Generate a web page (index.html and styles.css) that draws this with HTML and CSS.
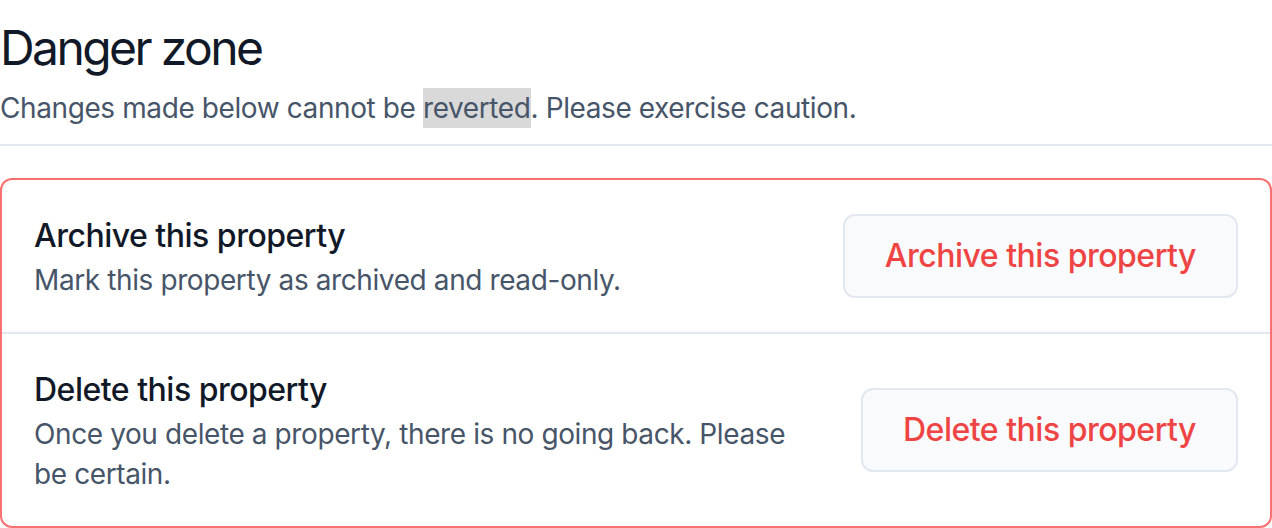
FILE: index.html
```html
<!DOCTYPE html>
<html lang="en">
<head>
<meta charset="utf-8">
<title>Danger zone</title>
<link rel="stylesheet" href="styles.css">
</head>
<body>
<main class="page">
  <header class="intro">
    <h2 class="title">Danger zone</h2>
    <p class="subtitle">Changes made below cannot be <span class="selected">reverted</span>. Please exercise caution.</p>
  </header>
  <hr class="separator">
  <section class="danger-card">
    <div class="danger-row">
      <div class="row-text">
        <h3 class="row-title">Archive this property</h3>
        <p class="row-desc">Mark this property as archived and read-only.</p>
      </div>
      <button class="danger-btn" type="button">Archive this property</button>
    </div>
    <div class="danger-row">
      <div class="row-text">
        <h3 class="row-title">Delete this property</h3>
        <p class="row-desc">Once you delete a property, there is no going back. Please be certain.</p>
      </div>
      <button class="danger-btn" type="button">Delete this property</button>
    </div>
  </section>
</main>
</body>
</html>
```

FILE: styles.css
```css
* {
  box-sizing: border-box;
}

html, body {
  margin: 0;
  padding: 0;
  background: #ffffff;
}

body {
  font-family: Inter, "Noto Sans", "Liberation Sans", sans-serif;
  color: #0f172a;
}

.page {
  padding-top: 16px;
}

.intro {
  display: flex;
  flex-direction: column;
  gap: 8px;
}

.title {
  margin: 0;
  font-size: 48px;
  line-height: 64px;
  font-weight: 400;
  letter-spacing: -2.6px;
  color: #111827;
}

.subtitle {
  margin: 0;
  font-size: 28px;
  line-height: 40px;
  color: #475569;
  letter-spacing: -0.4px;
}

.selected {
  display: inline-block;
  background: #d9d9d9;
}

.separator {
  margin: 16px 0 32px;
  border: 0;
  border-top: 2px solid #e2e8f0;
  height: 0;
}

.danger-card {
  border: 2px solid #f87171;
  border-radius: 12px;
  overflow: hidden;
}

.danger-row {
  display: flex;
  align-items: center;
  justify-content: space-between;
  gap: 48px;
  padding: 32px;
}

.danger-row + .danger-row {
  border-top: 2px solid #e2e8f0;
}

.row-text {
  display: flex;
  flex-direction: column;
  max-width: 770px;
}

.row-title {
  margin: 0;
  font-size: 32px;
  line-height: 48px;
  font-weight: 500;
  letter-spacing: -0.5px;
  color: #111827;
}

.row-desc {
  margin: 0;
  font-size: 28px;
  line-height: 40px;
  color: #475569;
  letter-spacing: -0.4px;
}

.danger-btn {
  flex-shrink: 0;
  font-family: inherit;
  font-size: 32px;
  line-height: 48px;
  font-weight: 500;
  letter-spacing: -0.5px;
  color: #ef4444;
  background: #f8fafc;
  border: 2px solid #e2e8f0;
  border-radius: 12px;
  padding: 16px 40px;
  cursor: pointer;
}
```
